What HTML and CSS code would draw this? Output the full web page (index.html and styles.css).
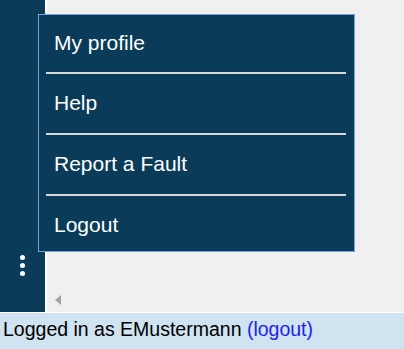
FILE: index.html
```html
<!DOCTYPE html>
<html lang="en">
<head>
    <meta charset="UTF-8">
    <title>Workspace</title>
    <link rel="stylesheet" href="styles.css">
</head>
<body>
<div class="app">
    <div class="workspace">
        <div class="sidebar">
            <button class="kebab" aria-label="Menu">
                <span class="dot"></span>
                <span class="dot"></span>
                <span class="dot"></span>
            </button>
        </div>
        <div class="main">
            <div class="scroll-left"></div>
        </div>
    </div>
    <div class="statusbar">
        Logged in as EMustermann <a href="#" class="logout-link">(logout)</a>
    </div>

    <!-- User menu popup -->
    <div class="user-menu">
        <a href="#" class="menu-item first">My profile</a>
        <a href="#" class="menu-item">Help</a>
        <a href="#" class="menu-item">Report a Fault</a>
        <a href="#" class="menu-item last">Logout</a>
    </div>
</div>
</body>
</html>
```

FILE: styles.css
```css
body {
    margin: 0;
    font-family: "Liberation Sans", Arial, sans-serif;
}
.app {
    position: relative;
    display: flex;
    flex-direction: column;
    height: 349px;
    overflow: hidden;
}
.workspace {
    flex: 1;
    display: flex;
}
.sidebar {
    width: 47px;
    box-sizing: border-box;
    background-color: #0a3b58;
    border-right: 2px solid #ffffff;
    display: flex;
    flex-direction: column;
    justify-content: flex-end;
    align-items: center;
    padding-bottom: 36px;
}
.kebab {
    border: none;
    background: none;
    padding: 0;
    margin-left: -1px;
    display: flex;
    flex-direction: column;
    gap: 3px;
    cursor: pointer;
}
.dot {
    width: 5px;
    height: 5px;
    border-radius: 50%;
    background-color: #fff;
}
.main {
    flex: 1;
    background-color: #f0f0f0;
    display: flex;
    align-items: flex-end;
    padding: 0 0 7px 8px;
}
.scroll-left {
    width: 0;
    height: 0;
    border-top: 5px solid transparent;
    border-bottom: 5px solid transparent;
    border-right: 6px solid #a3a3a3;
}
.statusbar {
    height: 37px;
    box-sizing: border-box;
    border-top: 1px solid #ffffff;
    background-color: #cfe3f0;
    color: #000;
    font-size: 19.5px;
    line-height: 33px;
    padding-left: 3px;
}
.logout-link {
    color: #2222ee;
    text-decoration: none;
}

/* Popup menu */
.user-menu {
    position: absolute;
    left: 38px;
    top: 14px;
    width: 317px;
    box-sizing: border-box;
    background-color: #0a3b58;
    border: 1px solid #7ba2d6;
    display: flex;
    flex-direction: column;
    padding: 0 8px 0 7px;
}
.menu-item {
    display: block;
    color: #fff;
    text-decoration: none;
    font-size: 21px;
    height: 59px;
    line-height: 58px;
    padding-left: 8px;
    border-bottom: 2px solid #d8d8d8;
}
.menu-item.first {
    height: 57px;
    line-height: 56px;
}
.menu-item.last {
    border-bottom: none;
    height: 55px;
}
```
